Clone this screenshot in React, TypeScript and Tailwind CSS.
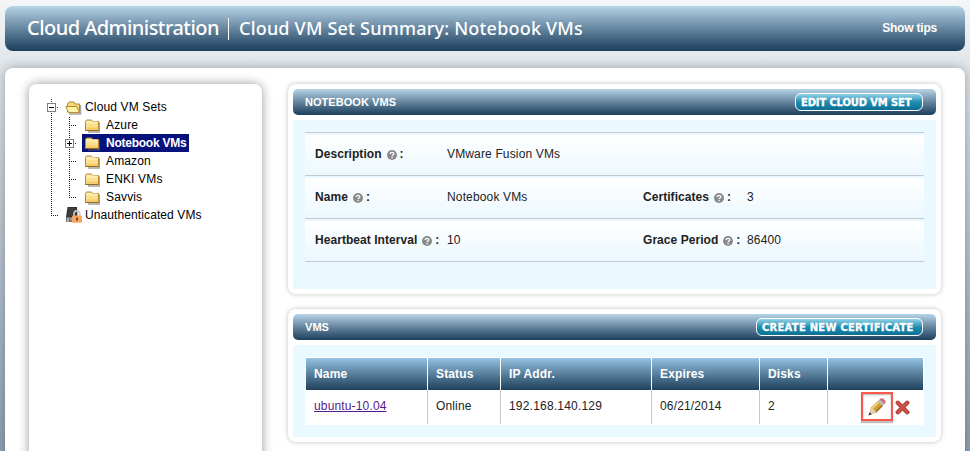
import type { ReactNode } from 'react'

function ClosedFolder() {
  return (
    <svg className="w-4 h-[15px] shrink-0" viewBox="0 0 16 15">
      <path d="M3 14h11.3V4.500" fill="none" stroke="#666" strokeOpacity=".6" strokeWidth="1.400" />
      <path d="M.5 12.500V3.500l1-1.500h5l1 1.500h6v9z" fill="#fbdf8c" stroke="#b08a3a" />
      <path d="M1.500 4h11M1.500 5h11" stroke="#fff3c4" />
      <path d="M1.500 9.500h11.500v2.500H1.500z" fill="#f3cd6c" />
      <path d="M.5 12.500h13" stroke="#94691a" />
    </svg>
  )
}

function OpenFolder() {
  return (
    <svg className="w-[17px] h-[15px] shrink-0" viewBox="0 0 17 15">
      <path d="M4 14h11.500V5" fill="none" stroke="#666" strokeOpacity=".6" strokeWidth="1.400" />
      <path d="M2.500 12V4l1.500-2h5l1 2h4.500v8.500z" fill="#f6d77c" stroke="#b08a3a" />
      <path d="M3.500 12.500L.8 6.500h10.900l2.800 6z" fill="#fdf3a8" stroke="#b88a2a" />
    </svg>
  )
}

function LockedServer() {
  return (
    <svg className="w-[17px] h-4 shrink-0" viewBox="0 0 17 16">
      <path d="M1.500 0H11l.5 10H0z" fill="#333" />
      <path d="M2 2h8M2 4h8M2 6h8M2 8h8" stroke="#555" strokeWidth=".6" />
      <path d="M0 10h10v5H0z" fill="#777" />
      <path d="M1 12h2M4.500 12h2M1 14h2" stroke="#ddd" />
      <path d="M8 9V6.800a2.900 2.900 0 0 1 5.800 0V9" fill="none" stroke="#c9c9c9" strokeWidth="1.600" />
      <rect x="6" y="8.500" width="10" height="7.200" rx="1" fill="#f6a565" />
      <path d="M11 10.500v3" stroke="#5a3115" strokeWidth="1.600" />
    </svg>
  )
}

function HelpIcon() {
  return (
    <svg className="w-[10px] h-[10px] mt-[2px]" viewBox="0 0 10 10">
      <circle cx="5" cy="5" r="5" fill="#8a8a8a" />
      <path d="M3.200 3.900C3.200 1.800 6.900 1.900 6.800 3.900 6.700 5 5.100 5 5.100 6.200M5.100 7v1.200" fill="none" stroke="#fff" strokeWidth="1.300" />
    </svg>
  )
}

function PencilIcon() {
  return (
    <svg className="w-[18px] h-[18px]" viewBox="0 0 18 18">
      <path d="M.8 17.300l2.200-7.800L9.800 3l5 4.800-7 7z" fill="#d19c33" />
      <path d="M4.300 10.300l6.700-6.500" stroke="#f0cf78" strokeWidth="2.200" />
      <path d="M7.600 14.200l7-7" stroke="#a0711f" strokeWidth="1.600" />
      <path d="M.8 17.300L2.900 10l1.800.4 2.800 2.800.2 1.600z" fill="#e3cfb5" />
      <path d="M.4 17.600l1.300-3.400 2.100 2.100z" fill="#333" />
      <path d="M9.600 3.200l2-1.900 5 4.800-2 2z" fill="#b9b9b4" />
      <path d="M11.500 1.400c1.400-1.500 3-1.500 4.600-.2 1.900 1.600 1.900 3.200.4 4.900z" fill="#cd6f78" />
    </svg>
  )
}

function DeleteIcon() {
  return (
    <svg className="w-[15px] h-[15px]" viewBox="0 0 15 15">
      <path d="M2.800 2.800l9.400 9.400M12.200 2.800l-9.400 9.400" stroke="#ab3a31" strokeWidth="4.400" strokeLinecap="round" />
      <path d="M2.800 2.800l9.400 9.400M12.200 2.800l-9.400 9.400" stroke="#cb5046" strokeWidth="2.800" strokeLinecap="round" />
    </svg>
  )
}

type Joint = 'line' | 'branch' | 'end' | 'minus' | 'plus'

// One 18px square of the dotted tree guides
function Guide({ joint }: { joint: Joint }) {
  const box = joint === 'minus' || joint === 'plus'
  return (
    <svg className="w-[18px] h-[18px] shrink-0" viewBox="0 0 18 18" shapeRendering="crispEdges">
      <path d={joint === 'end' ? 'M8.500 1v9' : 'M8.500 1v17'} stroke="#222" strokeDasharray="1 1" />
      {joint !== 'line' && <path d="M8 9.500h7" stroke="#222" strokeDasharray="1 1" />}
      {box && <rect x="4.500" y="5.500" width="8" height="8" fill="#fff" stroke="#808080" />}
      {box && <path d="M6 9.500h5" stroke="#000" />}
      {joint === 'plus' && <path d="M8.500 7v5" stroke="#000" />}
    </svg>
  )
}

const sets: { name: string; joint: Joint; selected?: boolean }[] = [
  { name: 'Azure', joint: 'branch' },
  { name: 'Notebook VMs', joint: 'plus', selected: true },
  { name: 'Amazon', joint: 'branch' },
  { name: 'ENKI VMs', joint: 'branch' },
  { name: 'Savvis', joint: 'end' },
]

function Sidebar() {
  return (
    <aside className="w-[233px] shrink-0 h-[420px] rounded-lg bg-white pt-[14px] pl-[14px] text-black shadow-[0_0_11px_rgba(0,0,0,0.4)]">
      <div className="flex h-[18px] items-center">
        <Guide joint="minus" />
        <div className="flex items-center gap-[3px] pl-1">
          <OpenFolder />
          <span>Cloud VM Sets</span>
        </div>
      </div>
      {sets.map((set) => (
        <div key={set.name} className="flex h-[18px] items-center">
          <Guide joint="line" />
          <Guide joint={set.joint} />
          <div
            className={
              set.selected
                ? 'ml-[3px] flex h-[18px] w-[107px] items-center gap-[5px] bg-[#06127c] pl-[3px] font-bold tracking-[-0.25px] text-white'
                : 'ml-[3px] flex h-[18px] items-center gap-[5px] pl-[3px]'
            }
          >
            <ClosedFolder />
            <span>{set.name}</span>
          </div>
        </div>
      ))}
      <div className="flex h-[18px] items-center">
        <Guide joint="end" />
        <div className="flex items-center gap-[2px] pl-[5px]">
          <LockedServer />
          <span className="tracking-[0.1px]">Unauthenticated VMs</span>
        </div>
      </div>
    </aside>
  )
}

function PanelButton({ className, children }: { className: string; children: ReactNode }) {
  return (
    <button
      className={`h-[18px] rounded-[6px] border border-white bg-linear-to-b from-[#8fd3e8] via-[#1d8db1] via-50% to-[#0b6f92] pl-[5px] text-left font-['DejaVu_Sans',sans-serif] text-[10px] font-bold leading-[15px] whitespace-nowrap text-white [-webkit-text-stroke:0.3px_white] ${className}`}
    >
      {children}
    </button>
  )
}

interface PanelProps {
  title: string
  action: ReactNode
  children: ReactNode
}

function Panel({ title, action, children }: PanelProps) {
  return (
    <section className="rounded-lg bg-white p-[5px] shadow-[0_0_5px_rgba(0,0,0,0.25)]">
      <header className="flex h-[26px] items-center justify-between rounded-[5px] bg-linear-to-b from-[#b8d4e8] to-[#1b3f5c] pl-3 pr-[13px]">
        <h2 className="text-[11px] font-bold tracking-[0.05px] text-white">{title}</h2>
        {action}
      </header>
      <div className="mt-[5px] bg-[#eaf8ff] px-3 py-3">{children}</div>
    </section>
  )
}

function FieldRow({ children }: { children: ReactNode }) {
  return (
    <div className="h-[43px] border-b border-[#c6cacd] pt-[2px]">
      <div className="grid h-10 grid-cols-[132px_196px_104px_1fr] items-center bg-linear-to-b from-white to-[#ecf8fe] pl-[10px] pb-[2px]">
        {children}
      </div>
    </div>
  )
}

function Label({ children }: { children: string }) {
  return (
    <div className="flex items-center font-bold tracking-[0.05px]">
      <span>{children}</span>
      <span className="ml-[5px] mr-[3px]">
        <HelpIcon />
      </span>
      <span>:</span>
    </div>
  )
}

const columns = ['Name', 'Status', 'IP Addr.', 'Expires', 'Disks', '']

function VmTable() {
  return (
    <div className="border border-b-0 border-white bg-white">
      <div className="grid h-8 grid-cols-[122px_73px_151px_108px_68px_1fr] bg-linear-to-b from-[#96c4e2] to-[#1f415c] font-bold text-white">
        {columns.map((column, i) => (
          <div key={i} className="flex items-center border-r border-white pl-2 last:border-r-0">
            {column}
          </div>
        ))}
      </div>
      <div className="grid h-[34px] grid-cols-[122px_73px_151px_108px_68px_1fr] leading-8">
        <div className="border-r border-[#c8c8c8] pl-2">
          <a href="#" className="text-[#551a8b] underline">
            ubuntu-10.04
          </a>
        </div>
        <div className="border-r border-[#c8c8c8] pl-2">Online</div>
        <div className="border-r border-[#c8c8c8] pl-2 tracking-[0.2px]">192.168.140.129</div>
        <div className="border-r border-[#c8c8c8] pl-2">06/21/2014</div>
        <div className="border-r border-[#c8c8c8] pl-2">2</div>
        <div className="flex items-start pl-[33px] pt-[2px]">
          <button className="flex h-[29px] w-8 items-center justify-center border-2 border-[#f9584b] shadow-[0_2px_1px_rgba(0,0,0,0.25),inset_0_1px_2px_rgba(0,0,0,0.3)]">
            <PencilIcon />
          </button>
          <button className="ml-[2px] mt-[8px]">
            <DeleteIcon />
          </button>
        </div>
      </div>
      <div className="h-px" />
    </div>
  )
}

export default function App() {
  return (
    <div className="h-[451px] overflow-hidden bg-linear-to-b from-[#f3f5f7] via-[#e3e9ed] via-12% to-[#8fa3b5] px-[5px] pt-[6px] font-['Liberation_Sans',Arial,sans-serif] text-[12px] leading-[18px] tracking-[0.15px] text-[#222]">
      <header className="flex h-[45px] items-center rounded-lg bg-linear-to-b from-[#b8d4e8] to-[#1b3f5c] pl-[22px] pr-7 font-['Noto_Sans',sans-serif] font-medium text-white">
        <span className="w-[191px] pb-[2px] text-[20px] tracking-[-0.55px] whitespace-nowrap">Cloud Administration</span>
        <span className="ml-[10px] mr-[10px] h-[22px] w-px bg-white" />
        <h1 className="pb-[2px] text-[18px] tracking-[0.2px]">Cloud VM Set Summary: Notebook VMs</h1>
        <a href="#" className="ml-auto pb-px font-['Liberation_Sans',Arial,sans-serif] font-bold tracking-[-0.2px]">
          Show tips
        </a>
      </header>
      <main className="mt-[17px] flex h-[440px] rounded-lg bg-white pl-6 pr-6 pt-4 shadow-[0_0_12px_rgba(0,0,0,0.3)]">
        <Sidebar />
        <div className="ml-[26px] flex w-[653px] flex-col gap-[15px]">
          <Panel
            title="NOTEBOOK VMS"
            action={<PanelButton className="w-32 tracking-[-0.15px]">EDIT CLOUD VM SET</PanelButton>}
          >
            <div className="mb-[15px] border-t border-[#c6cacd]">
              <FieldRow>
                <Label>Description</Label>
                <span>VMware Fusion VMs</span>
              </FieldRow>
              <FieldRow>
                <Label>Name</Label>
                <span>Notebook VMs</span>
                <Label>Certificates</Label>
                <span>3</span>
              </FieldRow>
              <FieldRow>
                <Label>Heartbeat Interval</Label>
                <span>10</span>
                <Label>Grace Period</Label>
                <span>86400</span>
              </FieldRow>
            </div>
          </Panel>
          <Panel
            title="VMS"
            action={<PanelButton className="w-[167px] tracking-[0.25px]">CREATE NEW CERTIFICATE</PanelButton>}
          >
            <VmTable />
          </Panel>
        </div>
      </main>
    </div>
  )
}
